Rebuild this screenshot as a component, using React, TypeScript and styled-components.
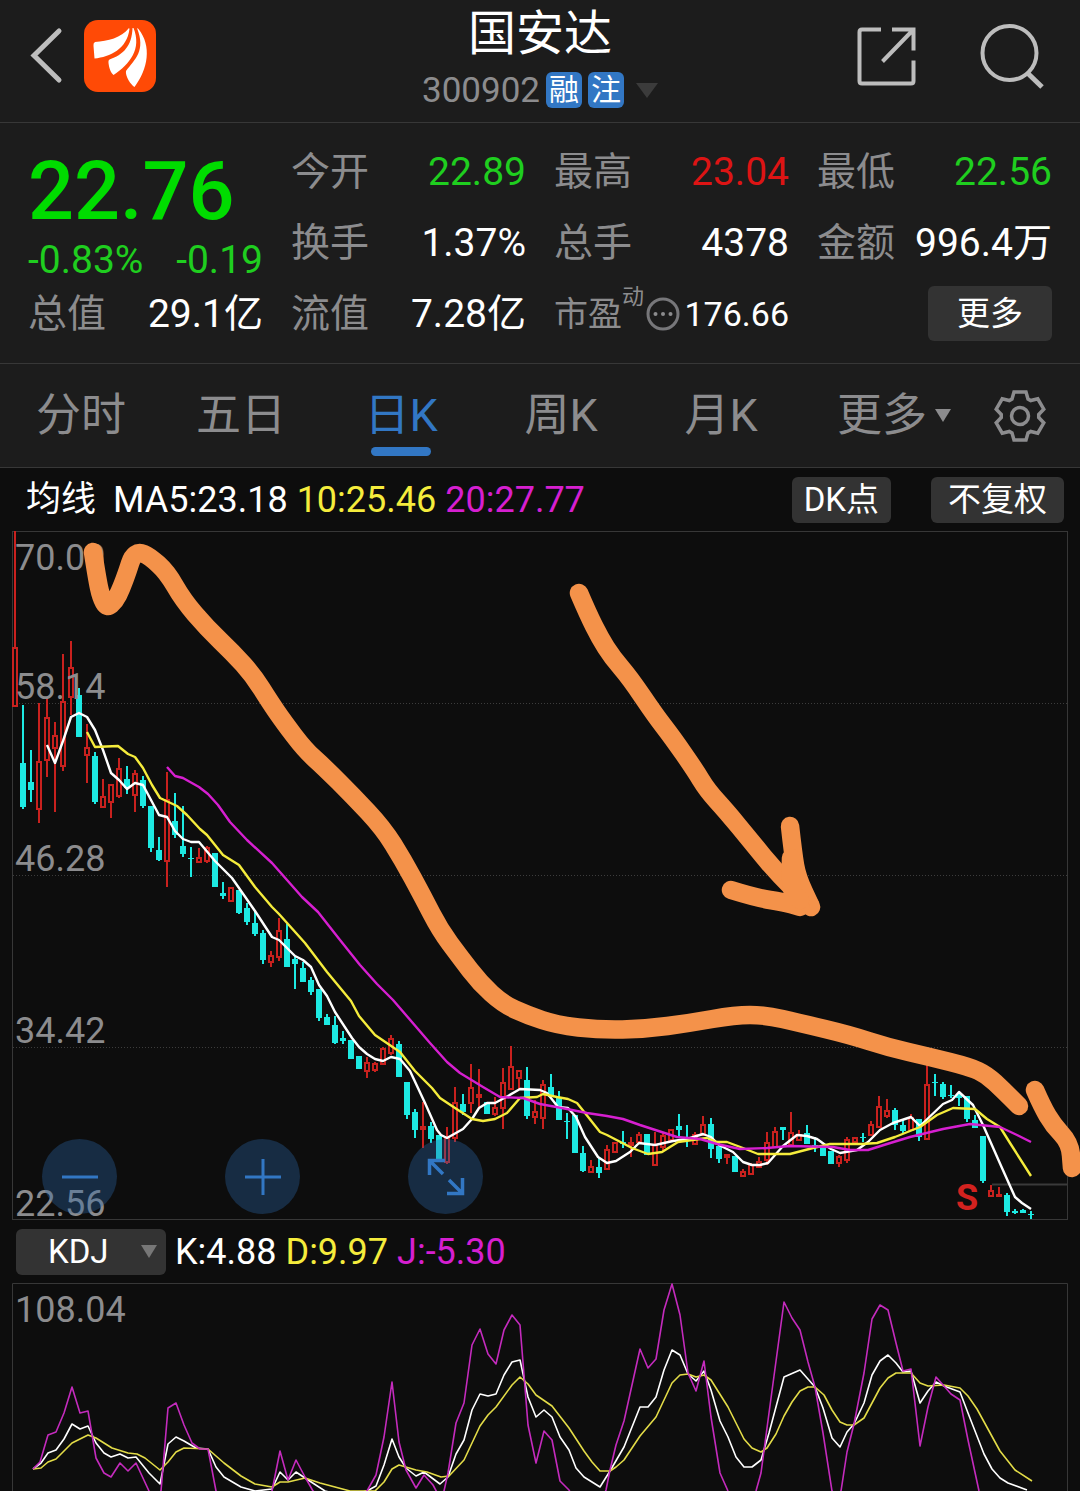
import React from "react";
import styled, { createGlobalStyle } from "styled-components";

const c = {
  panel: "#1c1c1c",
  chart: "#0d0d0d",
  line: "#373737",
  chip: "#333333",
  muted: "#8c8c8e",
  icon: "#bdbdbd",
  green: "#1fce1f",
  red: "#dd1414",
  blue: "#3277c4",
  white: "#ffffff",
  yellow: "#f5ec3c",
  magenta: "#d61fd0",
  cyan: "#1de9e2",
  candleRed: "#c9211e",
  marker: "#f4924a",
};

const GlobalStyle = createGlobalStyle`
  * { box-sizing: border-box; }
  body {
    margin: 0;
    background: ${c.chart};
    font-family: Roboto, "Noto Sans CJK SC", sans-serif;
  }
  button, select { font-family: inherit; border: 0; margin: 0; padding: 0; cursor: pointer; }
  h1, dl, dt, dd { margin: 0; font-weight: 400; }
`;

const Page = styled.main`
  color: ${c.white};
  overflow: hidden;
`;

const Header = styled.header`
  display: grid;
  grid-template-columns: 1fr auto 1fr;
  height: 123px;
  padding: 0 24px;
  background: ${c.panel};
  border-bottom: 1px solid ${c.line};
`;

const HeaderSide = styled.div<{ $end?: boolean }>`
  display: flex;
  align-items: flex-start;
  justify-content: ${(p) => (p.$end ? "flex-end" : "flex-start")};
  gap: ${(p) => (p.$end ? 56 : 16)}px;
  padding-top: 20px;
`;

const IconButton = styled.button`
  display: flex;
  align-items: center;
  justify-content: center;
  height: 72px;
  background: none;
`;

const TitleBlock = styled.div`
  display: flex;
  flex-direction: column;
  align-items: center;
`;

const Title = styled.h1`
  padding-top: 4px;
  font-size: 48px;
  line-height: 60px;
`;

const CodeRow = styled.div`
  display: flex;
  align-items: center;
  gap: 6px;
  height: 52px;
  color: ${c.muted};
  font-size: 35px;
`;

const Tag = styled.span`
  width: 36px;
  height: 36px;
  border-radius: 6px;
  background: ${c.blue};
  color: ${c.white};
  font-size: 30px;
  line-height: 36px;
  text-align: center;
`;

const Triangle = styled.span<{ $size: number; $height: number; $color: string }>`
  border-left: ${(p) => p.$size}px solid transparent;
  border-right: ${(p) => p.$size}px solid transparent;
  border-top: ${(p) => p.$height}px solid ${(p) => p.$color};
`;

const CodeArrow = styled(Triangle)`
  margin-left: 6px;
`;

const Quote = styled.section`
  display: grid;
  grid-template-columns: repeat(4, 1fr);
  grid-template-rows: repeat(3, 71px);
  column-gap: 28px;
  padding: 13px 28px 14px;
  background: ${c.panel};
  border-bottom: 1px solid ${c.line};
`;

const PriceCell = styled.div`
  grid-row: span 2;
  display: flex;
  flex-direction: column;
  padding-top: 4px;
  color: ${c.green};
`;

const Price = styled.strong`
  color: #00dc00;
  font-size: 81px;
  font-weight: 500;
  line-height: 104px;
`;

const Change = styled.div`
  display: flex;
  justify-content: space-between;
  font-size: 39px;
  line-height: 32px;
`;

const Stat = styled.dl`
  display: flex;
  align-items: center;
  justify-content: space-between;
  line-height: 46px;
  white-space: nowrap;
`;

const StatLabel = styled.dt<{ $small?: boolean }>`
  display: flex;
  align-items: center;
  color: ${c.muted};
  font-size: ${(p) => (p.$small ? 34 : 39)}px;
`;

const StatValue = styled.dd<{ $color?: string; $small?: boolean }>`
  color: ${(p) => p.$color || c.white};
  font-size: ${(p) => (p.$small ? 34 : 39)}px;
`;

const Sup = styled.sup`
  align-self: flex-start;
  margin-right: 2px;
  font-size: 22px;
  line-height: 12px;
`;

const MoreCell = styled.div`
  display: flex;
  align-items: center;
  justify-content: flex-end;
`;

const Chip = styled.button<{ $pad: number; $tall?: boolean }>`
  height: ${(p) => (p.$tall ? 55 : 46)}px;
  padding: 0 ${(p) => p.$pad}px;
  border-radius: 6px;
  background: ${c.chip};
  color: ${c.white};
  font-size: 33px;
  line-height: 44px;
  white-space: nowrap;
`;

const Tabs = styled.nav`
  display: grid;
  grid-template-columns: repeat(6, 1fr) 120px;
  height: 104px;
  background: ${c.panel};
  border-bottom: 1px solid ${c.line};
`;

const Tab = styled.button<{ $active?: boolean; $menu?: boolean }>`
  position: relative;
  display: flex;
  align-items: center;
  justify-content: center;
  gap: 8px;
  padding-left: ${(p) => (p.$menu ? 28 : 2)}px;
  background: none;
  color: ${(p) => (p.$active ? c.blue : c.muted)};
  font-size: 45px;
  line-height: 52px;
  white-space: nowrap;

  &::after {
    content: "";
    display: ${(p) => (p.$active ? "block" : "none")};
    position: absolute;
    left: calc(50% - 29px);
    bottom: 11px;
    width: 60px;
    height: 9px;
    border-radius: 5px;
    background: ${c.blue};
  }
`;

const GearButton = styled(IconButton)`
  width: 120px;
  height: 103px;
`;

const InfoRow = styled.div`
  display: flex;
  align-items: center;
  gap: 9px;
  height: 63px;
  padding: 0 16px;
  font-size: 36px;
  line-height: 46px;
  white-space: nowrap;
`;

const Reading = styled.span<{ $color: string }>`
  color: ${(p) => p.$color};
`;

const LineName = styled.span`
  padding: 0 8px 0 10px;
  font-size: 35px;
`;

const ChipGroup = styled.div`
  display: flex;
  gap: 40px;
  margin-left: auto;
`;

const SelectBox = styled.label`
  position: relative;
  display: flex;
  align-items: center;
  width: 150px;
`;

const IndicatorSelect = styled.select`
  appearance: none;
  width: 100%;
  height: 46px;
  padding-left: 32px;
  border-radius: 6px;
  background: ${c.chip};
  color: ${c.white};
  font-size: 33px;
`;

const SelectArrow = styled(Triangle)`
  position: absolute;
  right: 9px;
  pointer-events: none;
`;

const ChartArea = styled.section`
  position: relative;
`;

const Plot = styled.svg`
  display: block;
  width: 100%;
  height: auto;
  overflow: visible;

  text {
    fill: ${c.muted};
    font-size: 36px;
  }

  text.sell {
    fill: #d3221f;
    font-weight: 700;
  }
`;

const ZoomBar = styled.div`
  position: absolute;
  left: 42px;
  bottom: 6px;
  display: flex;
  gap: 108px;
`;

const ZoomButton = styled.button`
  display: flex;
  align-items: center;
  justify-content: center;
  width: 75px;
  height: 75px;
  border-radius: 50%;
  background: rgba(44, 102, 170, 0.35);
`;

/* One entry per trading day: kind, high, body top, body bottom, low. */
const days = `
r 531 648 706 706;c 705 763 807 809;c 750 782 790 802;r 703 762 809 823;r 697 718 760 777;r 722 736 748 812;r 654 702 766 771;r 641 668 697 715
c 688 695 737 737;r 724 748 755 783;c 752 756 802 804;r 779 797 807 807;r 785 785 802 818;r 758 769 796 798;c 766 779 788 794;r 770 774 795 812
c 776 780 806 808;c 806 806 848 852;c 837 850 860 861;r 772 800 861 887;c 793 821 835 838;c 806 846 854 857;c 847 858 859 877;r 848 858 862 863
r 846 848 861 863;c 853 853 887 887;c 882 893 896 899;r 888 888 901 901;c 890 890 913 914;c 903 908 922 925;c 910 923 934 936;c 930 933 960 964
r 951 956 962 967;r 918 931 957 961;c 924 939 967 967;c 957 959 964 989;c 962 968 982 982;c 977 980 992 995;c 989 989 1018 1021;c 1014 1017 1025 1025
c 1016 1025 1043 1044;c 1031 1038 1041 1044;c 1040 1040 1059 1059;c 1056 1056 1069 1069;r 1057 1063 1071 1078;r 1062 1064 1070 1072;r 1047 1049 1064 1064;r 1035 1039 1053 1055
c 1041 1044 1077 1077;c 1082 1082 1115 1119;c 1109 1112 1130 1138;r 1102 1127 1129 1148;c 1122 1126 1139 1143;c 1135 1135 1159 1159;r 1127 1138 1162 1164;r 1087 1103 1138 1142
c 1094 1104 1112 1115;r 1064 1088 1103 1113;r 1069 1095 1097 1108;c 1102 1102 1114 1114;r 1097 1108 1114 1116;r 1068 1083 1108 1129;r 1046 1067 1089 1089;r 1071 1071 1078 1090
c 1067 1080 1116 1119;r 1100 1112 1117 1124;r 1080 1085 1118 1129;c 1074 1087 1097 1097;c 1091 1097 1120 1120;c 1113 1121 1122 1139;c 1115 1115 1153 1153;c 1146 1153 1171 1172
r 1160 1167 1172 1172;c 1157 1167 1173 1178;r 1145 1150 1169 1169;r 1142 1143 1152 1152;c 1131 1142 1144 1148;r 1137 1143 1145 1157;r 1132 1135 1142 1142;c 1134 1134 1155 1155
r 1132 1145 1165 1165;r 1133 1136 1147 1152;r 1129 1130 1140 1140;c 1114 1126 1130 1136;c 1125 1137 1138 1147;r 1132 1135 1144 1144;r 1116 1125 1135 1135;c 1118 1124 1149 1158
c 1142 1146 1159 1163;r 1155 1155 1157 1164;c 1156 1156 1172 1172;r 1169 1172 1176 1177;r 1163 1165 1174 1174;r 1157 1162 1167 1167;r 1132 1143 1160 1165;r 1127 1132 1147 1147
c 1127 1127 1130 1140;r 1112 1133 1145 1145;r 1130 1135 1140 1140;c 1125 1133 1144 1144;c 1137 1145 1146 1152;c 1145 1145 1156 1156;c 1151 1151 1164 1164;r 1155 1157 1163 1167
r 1137 1140 1160 1163;r 1137 1138 1142 1142;c 1133 1137 1138 1142;r 1121 1125 1135 1135;r 1096 1107 1127 1127;r 1099 1111 1116 1118;c 1108 1110 1125 1130;c 1120 1125 1131 1133
r 1114 1118 1130 1130;c 1119 1119 1137 1141;r 1065 1085 1139 1139;c 1074 1082 1083 1096;c 1082 1084 1097 1099;c 1085 1095 1096 1098;c 1092 1095 1098 1106;c 1096 1096 1119 1122
c 1115 1120 1128 1128;c 1136 1136 1181 1183;r 1185 1191 1196 1196;r 1187 1195 1196 1196;c 1193 1195 1212 1216;c 1209 1211 1213 1214;c 1209 1210 1213 1213;c 1211 1214 1215 1219
`
  .trim()
  .split(/[;\n]/)
  .map((row, i) => {
    const [kind, ...v] = row.split(" ");
    const [high, top, bottom, low] = v.map(Number);
    return { kind, x: 15 + i * 8, high, top, bottom, low };
  });

const ma5 =
  "47,745 55,763 63,741 71,717 79,713 87,717 95,730 103,750 111,773 119,780 127,789 135,783 143,785 151,800 159,815 167,817 175,831 183,839 191,842 199,842 215,861 232,878 239,888 255,911 272,937 279,940 295,956 303,960 311,967 319,985 327,996 335,1012 352,1038 359,1047 367,1054 375,1059 383,1061 391,1057 400,1059 410,1071 425,1103 437,1130 441,1135 447,1138 463,1129 472,1119 479,1108 487,1103 495,1103 508,1096 520,1089 540,1090 547,1093 558,1107 568,1108 576,1117 585,1137 598,1157 607,1163 616,1161 630,1152 639,1143 655,1145 673,1141 687,1139 703,1134 711,1137 719,1145 733,1152 743,1162 752,1165 760,1165 768,1163 783,1146 797,1135 807,1136 817,1139 831,1149 840,1153 857,1150 868,1142 880,1130 893,1123 911,1117 920,1126 943,1104 952,1100 959,1092 973,1105 983,1125 1002,1168 1015,1197 1022,1203 1031,1209";
const ma10 =
  "87,732 95,747 118,746 128,754 135,757 143,768 152,785 160,798 177,806 187,815 200,829 207,835 223,855 239,865 255,887 272,907 279,914 305,943 327,972 351,1001 359,1016 375,1035 400,1052 415,1071 432,1088 440,1098 455,1108 472,1119 483,1121 495,1119 507,1113 520,1098 537,1097 543,1094 557,1097 568,1099 577,1103 585,1113 600,1132 607,1135 632,1148 648,1154 662,1152 678,1142 707,1138 717,1142 727,1142 743,1148 758,1154 790,1154 813,1148 830,1144 862,1144 877,1143 895,1137 920,1127 937,1115 953,1108 975,1109 987,1119 1000,1127 1010,1143 1031,1176";
const ma20 =
  "167,767 175,776 183,778 199,787 208,794 218,805 230,822 247,840 272,863 302,897 318,912 340,940 360,965 377,984 393,1000 430,1043 447,1062 460,1073 483,1087 500,1097 523,1098 540,1104 567,1109 587,1113 607,1116 623,1119 640,1125 677,1137 700,1139 717,1144 740,1149 767,1148 790,1146 833,1147 850,1150 868,1150 887,1144 910,1137 943,1129 970,1124 1000,1127 1017,1135 1031,1142";

const kLine =
  "33,1469 41,1463 48,1453 56,1450 64,1439 72,1424 80,1429 88,1426 96,1443 104,1453 111,1457 120,1454 128,1458 136,1457 149,1473 160,1484 168,1444 176,1437 184,1441 196,1448 208,1449 216,1467 224,1477 241,1487 255,1491 272,1489 280,1472 288,1480 296,1472 305,1478 325,1491 345,1496 367,1491 376,1486 384,1465 392,1439 399,1457 406,1468 416,1476 424,1472 432,1478 440,1484 448,1477 456,1454 464,1440 472,1410 480,1394 488,1396 496,1394 504,1375 512,1362 520,1360 528,1397 536,1417 544,1410 552,1417 560,1437 569,1450 576,1468 584,1477 592,1482 600,1487 610,1471 624,1447 640,1407 648,1407 656,1397 664,1370 672,1350 680,1355 688,1374 696,1381 704,1371 711,1390 720,1421 728,1437 736,1457 744,1467 752,1467 761,1460 769,1433 784,1377 800,1370 815,1387 823,1408 832,1438 840,1447 847,1432 854,1424 864,1403 872,1375 880,1361 888,1355 896,1363 903,1372 911,1371 920,1403 928,1391 936,1382 944,1386 960,1392 968,1413 984,1454 992,1469 1000,1478 1008,1483 1027,1490";
const dLine =
  "33,1469 41,1468 48,1462 56,1459 72,1443 88,1435 96,1438 112,1448 128,1453 137,1454 145,1458 160,1470 168,1462 176,1452 184,1448 208,1449 224,1463 241,1476 255,1484 272,1487 280,1482 288,1482 305,1478 320,1483 350,1491 375,1491 384,1482 392,1469 399,1465 416,1470 427,1472 441,1477 449,1476 464,1460 480,1426 488,1415 496,1407 512,1385 520,1377 528,1384 536,1395 552,1406 569,1428 584,1451 592,1462 600,1471 610,1471 616,1467 624,1460 640,1436 656,1417 672,1383 680,1375 688,1374 696,1377 704,1375 711,1380 728,1407 744,1439 752,1448 761,1452 767,1448 776,1434 784,1416 792,1402 800,1391 808,1387 815,1387 824,1395 832,1410 840,1422 847,1425 854,1425 864,1418 880,1388 888,1378 896,1373 911,1373 920,1383 928,1386 944,1385 960,1388 968,1396 977,1409 1000,1451 1015,1470 1032,1481";
const jLine =
  "33,1469 40,1462 48,1435 56,1432 64,1413 72,1387 80,1413 88,1411 96,1458 104,1473 111,1477 120,1463 128,1471 136,1463 149,1491 156,1513 161,1491 168,1408 176,1403 184,1425 192,1443 200,1449 208,1449 216,1491 240,1520 272,1491 280,1451 288,1480 296,1460 305,1477 313,1491 340,1510 367,1491 376,1475 384,1437 392,1382 399,1442 406,1470 416,1488 424,1475 433,1485 440,1498 444,1491 448,1473 456,1423 464,1403 472,1345 480,1329 488,1354 496,1364 504,1330 512,1315 520,1325 528,1425 536,1463 544,1431 552,1440 560,1481 569,1490 590,1530 606,1490 610,1470 616,1445 624,1421 640,1349 648,1368 656,1359 664,1310 672,1284 680,1315 688,1373 696,1391 704,1361 711,1417 720,1473 728,1491 742,1520 756,1491 761,1473 769,1413 784,1302 792,1318 800,1330 808,1362 815,1387 823,1433 832,1491 836,1510 841,1491 847,1452 854,1424 864,1373 872,1319 880,1305 888,1310 896,1343 903,1371 911,1369 920,1446 928,1407 936,1377 944,1386 951,1394 960,1400 968,1440 979,1491";

/* Pen marks, as the points that the pen passed through. */
const strokes = [
  "93,552 97,578 101,597 107,608 115,601 121,589 128,570 132,557 139,552 149,556 167,572 183,600 207,628 233,653 253,675 270,702 283,721 305,750 324,767 353,796 383,828 403,860 423,897 440,930 460,957 480,983 503,1004 527,1015 557,1025 600,1030 645,1029 690,1023 735,1015 765,1015 800,1023 850,1035 887,1047 930,1057 970,1067 987,1075 1003,1090 1019,1106",
  "1035,1090 1042,1106 1053,1125 1070,1143 1072,1168",
  "579,593 588,614 600,638 612,657 630,678 655,715 672,737 695,770 707,790 727,812 750,840 777,873 810,905",
  "790,826 793,853 797,877 811,907",
  "731,890 757,898 783,902 800,907",
  "791,858 790,892 800,900",
];

/* Runs a quadratic curve through the midpoints, so the pen line bends softly. */
function smooth(points: string) {
  const p = points.split(" ").map((pair) => pair.split(",").map(Number));
  const last = p[p.length - 1];
  let d = `M${p[0]}`;
  for (let i = 1; i < p.length - 1; i++) {
    const mid = [(p[i][0] + p[i + 1][0]) / 2, (p[i][1] + p[i + 1][1]) / 2];
    d += `Q${p[i]} ${mid}`;
  }
  return `${d}L${last}`;
}

/* Six-toothed cog outline around the origin. */
const cog = Array.from({ length: 6 }, (_, i) => {
  const a = (i * Math.PI) / 3;
  return [[-8, -17], [-6, -24], [6, -24], [8, -17]]
    .map(([x, y]) => `${x * Math.cos(a) - y * Math.sin(a)},${x * Math.sin(a) + y * Math.cos(a)}`)
    .join(" ");
}).join(" ");

const stats: { label: string; value: string; color?: string }[] = [
  { label: "今开", value: "22.89", color: c.green },
  { label: "最高", value: "23.04", color: c.red },
  { label: "最低", value: "22.56", color: c.green },
  { label: "换手", value: "1.37%" },
  { label: "总手", value: "4378" },
  { label: "金额", value: "996.4万" },
  { label: "总值", value: "29.1亿" },
  { label: "流值", value: "7.28亿" },
];

const axis: [string, number][] = [
  ["70.00", 570],
  ["58.14", 699],
  ["46.28", 871],
  ["34.42", 1043],
  ["22.56", 1216],
];

function Candle({ d }: { d: (typeof days)[number] }) {
  const rising = d.kind === "r";
  const color = rising ? c.candleRed : c.cyan;
  const height = Math.max(d.bottom - d.top, 1);
  return (
    <g>
      <path
        d={`M${d.x} ${d.high}V${d.top}M${d.x} ${d.bottom}V${d.low}`}
        stroke={color}
        strokeWidth={2}
      />
      {rising ? (
        <rect x={d.x - 2} y={d.top} width={4} height={height} fill="none" stroke={color} strokeWidth={2} />
      ) : (
        <rect x={d.x - 3} y={d.top} width={6} height={height} fill={color} />
      )}
    </g>
  );
}

function PriceChart() {
  return (
    <Plot viewBox="0 531 1080 689" role="img" aria-label="日K">
      <rect x="12.5" y="531.5" width="1055" height="688" fill="none" stroke={c.line} />
      <path
        d="M13 703.5H1067M13 875.5H1067M13 1047.5H1067"
        stroke="#3c3c3c"
        strokeDasharray="1 2"
      />
      <path d="M992 1184.5H1067" stroke="#3a3a3a" strokeWidth={2} />
      {days.map((d) => (
        <Candle key={d.x} d={d} />
      ))}
      {axis.map(([label, y]) => (
        <text key={label} x={15} y={y}>
          {label}
        </text>
      ))}
      <g fill="none" strokeWidth={2.4} strokeLinejoin="round">
        <polyline points={ma5} stroke={c.white} />
        <polyline points={ma10} stroke={c.yellow} />
        <polyline points={ma20} stroke={c.magenta} />
      </g>
      <text className="sell" x={956} y={1210}>
        S
      </text>
      <g fill="none" stroke={c.marker} strokeWidth={18.5} strokeLinecap="round" strokeLinejoin="round">
        {strokes.map((points) => (
          <path key={points} d={smooth(points)} />
        ))}
      </g>
    </Plot>
  );
}

function KdjChart() {
  return (
    <Plot viewBox="0 1283 1080 208" role="img" aria-label="KDJ">
      <path d="M12.5 1491V1283.5H1067.5V1491" fill="none" stroke={c.line} />
      <text x={15} y={1322}>
        108.04
      </text>
      <g fill="none" strokeWidth={1.6} strokeLinejoin="round">
        <polyline points={kLine} stroke={c.white} />
        <polyline points={dLine} stroke="#e3dc48" />
        <polyline points={jLine} stroke="#c42bbd" />
      </g>
    </Plot>
  );
}

export default function App() {
  return (
    <Page>
      <GlobalStyle />
      <Header>
        <HeaderSide>
          <IconButton aria-label="返回">
            <svg width="44" height="72" viewBox="24 20 44 72" fill="none" stroke={c.icon} strokeWidth={5}>
              <path d="M59 31L34 55.500L59 80" strokeLinecap="round" strokeLinejoin="miter" />
            </svg>
          </IconButton>
          <svg width="72" height="72" viewBox="84 19 72 72" aria-hidden="true">
            <rect x="84" y="19" width="72" height="72" rx="14" fill="#ff4a06" />
            <g fill="#fff">
              <path d="M129 27C121 37 108 40 95 41Q93 42 93.500 45L94.500 57.500C110 56 127 48 129.500 28Z" />
              <path d="M132.500 27C132 45 123 54 109.500 58.500Q108 59 108.500 62C109 67 111 72 113.500 74C130 63 142 48 133.500 27Z" />
              <path d="M137 27C146 50 135 58 126 70C125 75 131 84 134.500 86C148 68 152 45 138.500 28Z" />
            </g>
          </svg>
        </HeaderSide>
        <TitleBlock>
          <Title>国安达</Title>
          <CodeRow>
            <span>300902</span>
            <Tag>融</Tag>
            <Tag>注</Tag>
            <CodeArrow $size={11} $height={15} $color="#3b3b3b" />
          </CodeRow>
        </TitleBlock>
        <HeaderSide $end>
          <IconButton aria-label="分享">
            <svg width="72" height="72" viewBox="852 19 72 72" fill="none" stroke={c.icon} strokeWidth={4}>
              <path d="M881 28.500H862Q859.500 28.500 859.500 31V80Q859.500 82.500 862 82.500H911Q913.500 82.500 913.500 80V59.500" />
              <path d="M892 28.500H913.500V49.500M913 29L882.500 60.500" />
            </svg>
          </IconButton>
          <IconButton aria-label="搜索">
            <svg width="76" height="72" viewBox="980 19 76 72" fill="none" stroke={c.icon} strokeWidth={4}>
              <circle cx="1009.500" cy="52" r="27" />
              <path d="M1028 72.500L1042 86" strokeWidth={5} />
            </svg>
          </IconButton>
        </HeaderSide>
      </Header>

      <Quote>
        <PriceCell>
          <Price>22.76</Price>
          <Change>
            <span>-0.83%</span>
            <span>-0.19</span>
          </Change>
        </PriceCell>
        {stats.map((s) => (
          <Stat key={s.label}>
            <StatLabel>{s.label}</StatLabel>
            <StatValue $color={s.color}>{s.value}</StatValue>
          </Stat>
        ))}
        <Stat>
          <StatLabel $small>
            市盈<Sup>动</Sup>
            <svg width="34" height="34" viewBox="0 0 34 34" fill={c.muted} aria-hidden="true">
              <circle cx="17" cy="17" r="15" fill="none" stroke="#77777a" strokeWidth="3" />
              <circle cx="9.500" cy="17" r="2" />
              <circle cx="17" cy="17" r="2" />
              <circle cx="24.500" cy="17" r="2" />
            </svg>
          </StatLabel>
          <StatValue $small>176.66</StatValue>
        </Stat>
        <MoreCell>
          <Chip $pad={29} $tall>
            更多
          </Chip>
        </MoreCell>
      </Quote>

      <Tabs>
        <Tab>分时</Tab>
        <Tab>五日</Tab>
        <Tab $active>日K</Tab>
        <Tab>周K</Tab>
        <Tab>月K</Tab>
        <Tab $menu>
          更多
          <Triangle $size={8} $height={13} $color={c.muted} />
        </Tab>
        <GearButton aria-label="设置">
          <svg width="56" height="56" viewBox="-28 -28 56 56" fill="none" stroke={c.muted} strokeWidth={3.5}>
            <polygon points={cog} />
            <circle r="8.500" />
          </svg>
        </GearButton>
      </Tabs>

      <InfoRow>
        <LineName>均线</LineName>
        <Reading $color={c.white}>MA5:23.18</Reading>
        <Reading $color={c.yellow}>10:25.46</Reading>
        <Reading $color={c.magenta}>20:27.77</Reading>
        <ChipGroup>
          <Chip $pad={12}>DK点</Chip>
          <Chip $pad={17}>不复权</Chip>
        </ChipGroup>
      </InfoRow>

      <ChartArea>
        <PriceChart />
        <ZoomBar>
          <ZoomButton aria-label="缩小">
            <svg width="38" height="38" viewBox="0 0 38 38" stroke={c.blue} strokeWidth={3}>
              <path d="M1 19H37" />
            </svg>
          </ZoomButton>
          <ZoomButton aria-label="放大">
            <svg width="38" height="38" viewBox="0 0 38 38" stroke={c.blue} strokeWidth={3}>
              <path d="M1 19H37M19 1V37" />
            </svg>
          </ZoomButton>
          <ZoomButton aria-label="全屏">
            <svg width="38" height="38" viewBox="0 0 38 38" fill="none" stroke={c.blue} strokeWidth={3.5}>
              <path d="M2.500 17V2.500H18M3 3L16 16" />
              <path d="M35.500 20V35.500H20M35 35L22 22" />
            </svg>
          </ZoomButton>
        </ZoomBar>
      </ChartArea>

      <InfoRow>
        <SelectBox>
          <IndicatorSelect aria-label="指标" defaultValue="KDJ">
            <option>KDJ</option>
          </IndicatorSelect>
          <SelectArrow $size={8} $height={13} $color="#777777" />
        </SelectBox>
        <Reading $color={c.white}>K:4.88</Reading>
        <Reading $color={c.yellow}>D:9.97</Reading>
        <Reading $color={c.magenta}>J:-5.30</Reading>
      </InfoRow>
      <KdjChart />
    </Page>
  );
}
